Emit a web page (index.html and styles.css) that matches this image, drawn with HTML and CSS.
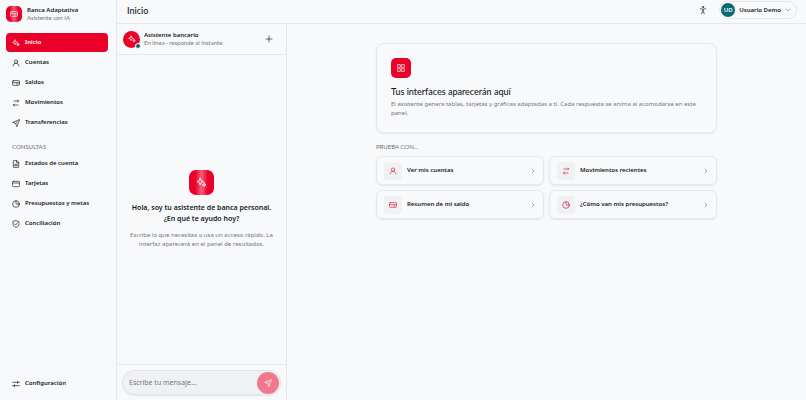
FILE: index.html
```html
<!DOCTYPE html>
<html lang="es">

<head>
    <meta charset="UTF-8">
    <meta name="viewport" content="width=device-width, initial-scale=1.0">
    <title>Banca Adaptativa</title>
    <link rel="stylesheet" href="styles.css">
</head>

<body>
    <svg class="sprite" aria-hidden="true">
        <symbol id="sparkles" viewBox="0 0 24 24">
            <path d="M9 3l2 5 5 2-5 2-2 5-2-5-5-2 5-2z" />
            <path d="M18 13l1 3 3 1-3 1-1 3-1-3-3-1 3-1z" />
        </symbol>
        <symbol id="user" viewBox="0 0 24 24">
            <circle cx="12" cy="8" r="5" />
            <path d="M3 21c1-5 4-8 9-8s8 3 9 8" />
        </symbol>
        <symbol id="card" viewBox="0 0 24 24">
            <rect x="1" y="4" width="22" height="16" rx="3" />
            <path d="M1 9h22" />
        </symbol>
        <symbol id="wallet" viewBox="0 0 24 24">
            <rect x="1" y="5" width="22" height="14" rx="3" />
            <path d="M1 11h22M14 15h4" />
        </symbol>
        <symbol id="swap" viewBox="0 0 24 24">
            <path d="M6 6h14M17 3l3 3-3 3M18 18H4M7 15l-3 3 3 3" />
        </symbol>
        <symbol id="sliders" viewBox="0 0 24 24">
            <path d="M2 7h20M17 4v6M2 17h20M7 14v6" />
        </symbol>
        <symbol id="send" viewBox="0 0 24 24">
            <path d="M22 2L2 10l9 3 3 9zM11 13l5-5" />
        </symbol>
        <symbol id="file" viewBox="0 0 24 24">
            <path d="M14 2H4v20h16V8zM14 2v6h6M8 13h8M8 17h8" />
        </symbol>
        <symbol id="pie" viewBox="0 0 24 24">
            <circle cx="12" cy="12" r="10" />
            <path d="M12 2v10h10" />
        </symbol>
        <symbol id="shield" viewBox="0 0 24 24">
            <path d="M12 2l9 3v7c0 5-4 8-9 10-5-2-9-5-9-10V5zM8 12l3 3 5-6" />
        </symbol>
        <symbol id="grid" viewBox="0 0 24 24">
            <path d="M2 2h8v8H2zM14 2h8v8h-8zM2 14h8v8H2zM14 14h8v8h-8z" />
        </symbol>
        <symbol id="person" viewBox="0 0 24 24">
            <circle cx="12" cy="3" r="2" />
            <path d="M4 8l8 2 8-2M12 10v5M12 15l-4 8M12 15l4 8" />
        </symbol>
        <symbol id="plus" viewBox="0 0 24 24">
            <path d="M12 3v18M3 12h18" />
        </symbol>
        <symbol id="right" viewBox="0 0 24 24">
            <path d="M8 4l8 8-8 8" />
        </symbol>
        <symbol id="down" viewBox="0 0 24 24">
            <path d="M4 8l8 8 8-8" />
        </symbol>
    </svg>

    <aside class="sidebar">
        <div class="brand">
            <span class="brand-logo shine"><svg class="icon"><use href="#wallet" /></svg></span>
            <div>
                <p class="name">Banca Adaptativa</p>
                <p class="sub">Asistente con IA</p>
            </div>
        </div>
        <nav class="nav">
            <a href="#" class="nav-item active"><svg class="icon"><use href="#sparkles" /></svg>Inicio</a>
            <a href="#" class="nav-item"><svg class="icon"><use href="#user" /></svg>Cuentas</a>
            <a href="#" class="nav-item"><svg class="icon"><use href="#wallet" /></svg>Saldos</a>
            <a href="#" class="nav-item"><svg class="icon"><use href="#swap" /></svg>Movimientos</a>
            <a href="#" class="nav-item"><svg class="icon"><use href="#send" /></svg>Transferencias</a>
            <h2 class="label">CONSULTAS</h2>
            <a href="#" class="nav-item"><svg class="icon"><use href="#file" /></svg>Estados de cuenta</a>
            <a href="#" class="nav-item"><svg class="icon"><use href="#card" /></svg>Tarjetas</a>
            <a href="#" class="nav-item"><svg class="icon"><use href="#pie" /></svg>Presupuestos y metas</a>
            <a href="#" class="nav-item"><svg class="icon"><use href="#shield" /></svg>Conciliación</a>
            <a href="#" class="nav-item settings"><svg class="icon"><use href="#sliders" /></svg>Configuración</a>
        </nav>
    </aside>

    <div class="page">
        <header class="topbar">
            <h1>Inicio</h1>
            <button class="plain" aria-label="Accesibilidad"><svg class="icon"><use href="#person" /></svg></button>
            <button class="account">
                <span class="avatar">UD</span>
                Usuario Demo
                <svg class="icon chevron"><use href="#down" /></svg>
            </button>
        </header>

        <div class="columns">
            <section class="chat">
                <div class="chat-header">
                    <span class="bot"><svg class="icon"><use href="#sparkles" /></svg><span class="status"></span></span>
                    <div>
                        <p class="name">Asistente bancario</p>
                        <p class="sub">En línea · responde al instante</p>
                    </div>
                    <button class="plain new-chat" aria-label="Nueva conversación"><svg class="icon"><use href="#plus" /></svg></button>
                </div>
                <div class="welcome">
                    <span class="welcome-logo shine"><svg class="icon"><use href="#sparkles" /></svg></span>
                    <h2>Hola, soy tu asistente de banca personal. ¿En qué te ayudo hoy?</h2>
                    <p>Escribe lo que necesitas o usa un acceso rápido. La interfaz aparecerá en el panel de resultados.</p>
                </div>
                <form class="composer">
                    <div class="field">
                        <input type="text" placeholder="Escribe tu mensaje..." aria-label="Mensaje">
                        <button type="button" class="send" aria-label="Enviar"><svg class="icon"><use href="#send" /></svg></button>
                    </div>
                </form>
            </section>

            <main class="results">
                <div class="content">
                    <section class="intro">
                        <span class="intro-logo"><svg class="icon"><use href="#grid" /></svg></span>
                        <h2>Tus interfaces aparecerán aquí</h2>
                        <p>El asistente genera tablas, tarjetas y gráficas adaptadas a ti. Cada respuesta se anima al acomodarse en este panel.</p>
                    </section>
                    <h2 class="label">PRUEBA CON...</h2>
                    <div class="actions">
                        <button class="action">
                            <span class="tile"><svg class="icon"><use href="#user" /></svg></span>
                            Ver mis cuentas
                            <svg class="icon chevron"><use href="#right" /></svg>
                        </button>
                        <button class="action">
                            <span class="tile"><svg class="icon"><use href="#swap" /></svg></span>
                            Movimientos recientes
                            <svg class="icon chevron"><use href="#right" /></svg>
                        </button>
                        <button class="action">
                            <span class="tile"><svg class="icon"><use href="#wallet" /></svg></span>
                            Resumen de mi saldo
                            <svg class="icon chevron"><use href="#right" /></svg>
                        </button>
                        <button class="action">
                            <span class="tile"><svg class="icon"><use href="#pie" /></svg></span>
                            ¿Cómo van mis presupuestos?
                            <svg class="icon chevron"><use href="#right" /></svg>
                        </button>
                    </div>
                </div>
            </main>
        </div>
    </div>
</body>

</html>
```
FILE: styles.css
```css
* {
    box-sizing: border-box;
}

body {
    margin: 0;
    display: flex;
    height: 100vh;
    font-family: "Noto Sans", "Open Sans", sans-serif;
    font-size: 6px;
    line-height: 9px;
    color: #15181c;
    background-color: #f8f9fb;
}

h1,
h2,
p {
    margin: 0;
}

button,
input {
    font: inherit;
    color: inherit;
    border: none;
    background: none;
    padding: 0;
}

button {
    cursor: pointer;
}

.sprite {
    display: none;
}

.icon {
    width: 8px;
    height: 8px;
    flex: none;
    fill: none;
    stroke: currentColor;
    stroke-width: 2;
    stroke-linecap: round;
    stroke-linejoin: round;
}

.name {
    font-weight: 600;
    line-height: 8px;
}

.sub {
    font-family: Lato, sans-serif;
    line-height: 8px;
    color: #74777c;
}

.label {
    font-family: Lato, sans-serif;
    font-size: 6px;
    font-weight: 400;
    line-height: 8px;
    color: #6d7075;
}

.shine {
    background: linear-gradient(90deg, #eb0029 25%, #f4617a 50%, #eb0029 75%);
}

.sidebar {
    width: 117px;
    flex: none;
    display: flex;
    flex-direction: column;
    padding: 6px 8px 7px 6px;
    border-right: 1px solid #e6e7e9;
}

.brand {
    display: flex;
    align-items: center;
    gap: 5px;
    margin-bottom: 11px;
}

.brand-logo,
.bot,
.welcome-logo,
.intro-logo,
.tile,
.avatar,
.send {
    display: flex;
    flex: none;
    align-items: center;
    justify-content: center;
    color: #fff;
}

.brand-logo {
    width: 16px;
    height: 16px;
    border-radius: 5px;
}

.nav {
    flex: 1;
    display: flex;
    flex-direction: column;
    gap: 1px;
}

.nav-item {
    display: flex;
    align-items: center;
    gap: 5px;
    height: 19px;
    padding: 0 6px;
    border-radius: 4px;
    font-weight: 600;
    color: inherit;
    text-decoration: none;
}

.nav-item.active {
    background-color: #eb0029;
    color: #fff;
}

.nav .label {
    margin: 10px 0 2px;
    padding-left: 6px;
}

.settings {
    margin-top: auto;
}

.page {
    flex: 1;
    min-width: 0;
    display: flex;
    flex-direction: column;
}

.topbar {
    display: flex;
    align-items: center;
    height: 24px;
    padding: 0 9px 3px 10px;
    border-bottom: 1px solid #e6e7e9;
}

.topbar h1 {
    flex: 1;
    font-family: Lato, sans-serif;
    font-size: 9px;
    font-weight: 500;
}

.plain {
    display: flex;
    padding: 4px;
}

.account {
    display: flex;
    align-items: center;
    gap: 4px;
    height: 18px;
    margin-left: 8px;
    padding: 0 5px 0 1px;
    border: 1px solid #e6e7e9;
    border-radius: 9px;
    font-weight: 600;
}

.avatar {
    width: 14px;
    height: 14px;
    border-radius: 50%;
    background-color: #0b6875;
}

.chevron {
    width: 6px;
    height: 6px;
    color: #5b5e63;
}

.columns {
    flex: 1;
    min-height: 0;
    display: flex;
}

.chat {
    width: 170px;
    flex: none;
    display: flex;
    flex-direction: column;
    border-right: 1px solid #e6e7e9;
}

.chat-header {
    display: flex;
    align-items: center;
    gap: 4px;
    height: 31px;
    padding: 0 9px 0 6px;
    border-bottom: 1px solid #e6e7e9;
}

.bot {
    position: relative;
    width: 17px;
    height: 17px;
    border-radius: 50%;
    background-color: #eb0029;
}

.status {
    position: absolute;
    right: -1px;
    bottom: -1px;
    width: 6px;
    height: 6px;
    border: 1px solid #f8f9fb;
    border-radius: 50%;
    background-color: #0b6875;
}

.new-chat {
    margin-left: auto;
}

.welcome {
    flex: 1;
    display: flex;
    flex-direction: column;
    align-items: center;
    justify-content: center;
    padding: 0 12px;
    text-align: center;
}

.welcome-logo {
    width: 25px;
    height: 25px;
    border-radius: 7px;
}

.welcome-logo .icon {
    width: 11px;
    height: 11px;
}

.welcome h2 {
    margin: 7px 0;
    font-size: 7px;
    font-weight: 600;
    line-height: 11px;
}

.welcome p {
    color: #74777c;
}

.composer {
    padding: 5px;
    border-top: 1px solid #e6e7e9;
}

.field {
    display: flex;
    align-items: center;
    height: 25px;
    padding: 0 1px 0 6px;
    border: 1px solid #e3e4e6;
    border-radius: 13px;
    background-color: #f0f1f2;
    box-shadow: 0 1px 2px rgba(0, 0, 0, 0.08);
}

.field input {
    flex: 1;
    min-width: 0;
    font-size: 7px;
    outline: none;
}

.field input::placeholder {
    color: #74777c;
}

.send {
    width: 22px;
    height: 22px;
    border-radius: 50%;
    background-color: #f0788c;
}

.results {
    flex: 1;
    padding: 19px 20px;
}

.content {
    max-width: 341px;
    margin: 0 auto;
}

.intro,
.action {
    border: 1px solid #e6e7e9;
    box-shadow: 0 1px 2px rgba(0, 0, 0, 0.08);
}

.intro {
    padding: 14px;
    border-radius: 8px;
}

.intro-logo {
    width: 20px;
    height: 20px;
    border-radius: 5px;
    background-color: #eb0029;
}

.intro h2 {
    margin: 8px 0 3px;
    font-family: Lato, sans-serif;
    font-size: 9px;
    font-weight: 500;
    line-height: 11px;
}

.intro p {
    color: #74777c;
}

.content .label {
    margin: 10px 0 5px;
}

.actions {
    display: grid;
    grid-template-columns: 1fr 1fr;
    gap: 5px;
}

.action {
    display: flex;
    align-items: center;
    gap: 5px;
    height: 29px;
    padding: 0 7px;
    border-radius: 6px;
    font-weight: 600;
    text-align: left;
}

.action .chevron {
    margin-left: auto;
}

.tile {
    width: 18px;
    height: 18px;
    border-radius: 4px;
    background-color: #f0f1f2;
    color: #cf1f3f;
}
```
